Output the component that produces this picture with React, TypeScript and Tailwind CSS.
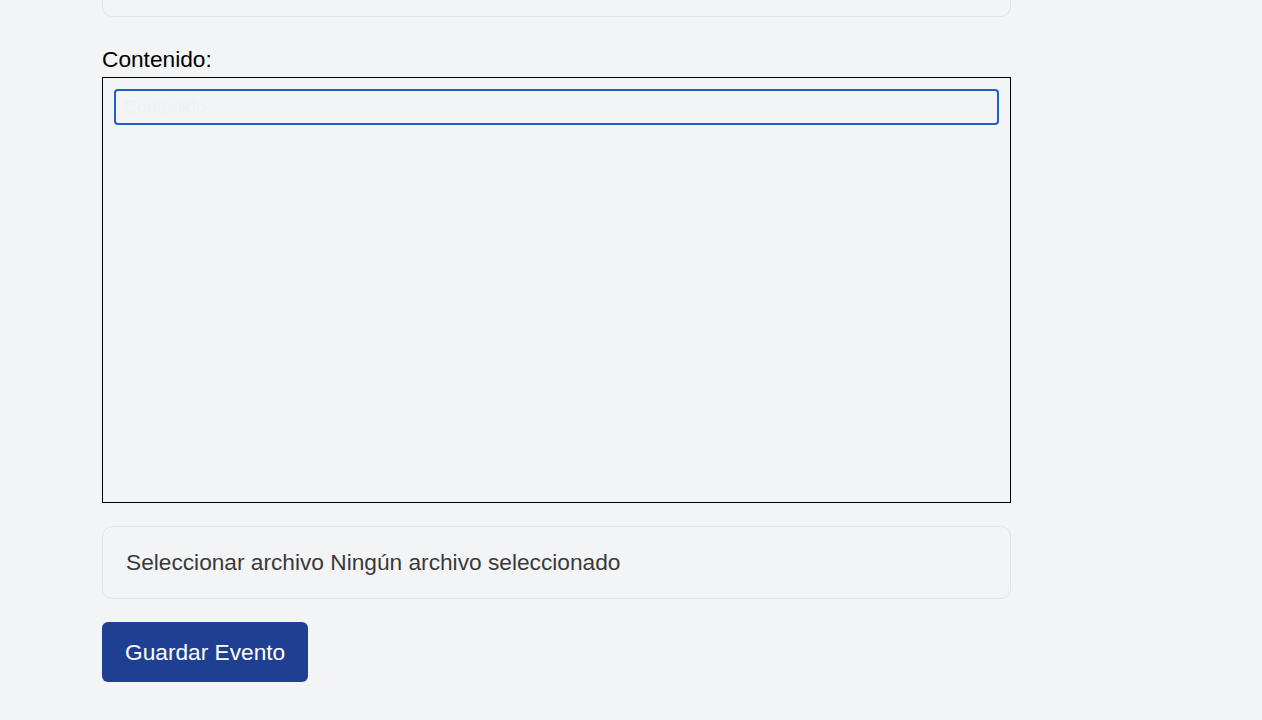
import React from 'react';

const font = { fontFamily: '"Liberation Sans", Arial, sans-serif' };

export default function App() {
  return (
    <div className="min-h-[720px] w-full bg-[#f3f4f6]" style={font}>
      <div className="w-[909px] ml-[102px] flex flex-col">
        {/* previous field, scrolled off */}
        <div className="h-[17px] border-x border-b border-[#e3e5e8] rounded-b-[10px] bg-[#f3f4f6]"></div>

        {/* Contenido */}
        <label className="mt-[29px] text-[22.7px] leading-[26px] text-black">Contenido:</label>
        <div className="mt-[5px] h-[426px] border border-black bg-[#f3f4f6] p-[11px]">
          <div className="h-[36px] rounded-[4px] border-2 border-[#1a62c4] bg-[#f3f4f6] px-2 flex items-center">
            <span className="text-[18px] text-[#eff1f3]">Contenido</span>
          </div>
        </div>

        {/* file input */}
        <div className="mt-[23px] h-[73px] rounded-[10px] border border-[#e3e5e8] flex items-center px-[23px]">
          <span className="text-[22.7px] text-[#3a3a3a]">Seleccionar archivo Ningún archivo seleccionado</span>
        </div>

        {/* submit */}
        <div className="mt-[23px]">
          <button className="h-[60px] px-[23px] rounded-[6px] bg-[#1f3f93] text-white text-[22.7px]">
            Guardar Evento
          </button>
        </div>
      </div>
    </div>
  );
}
